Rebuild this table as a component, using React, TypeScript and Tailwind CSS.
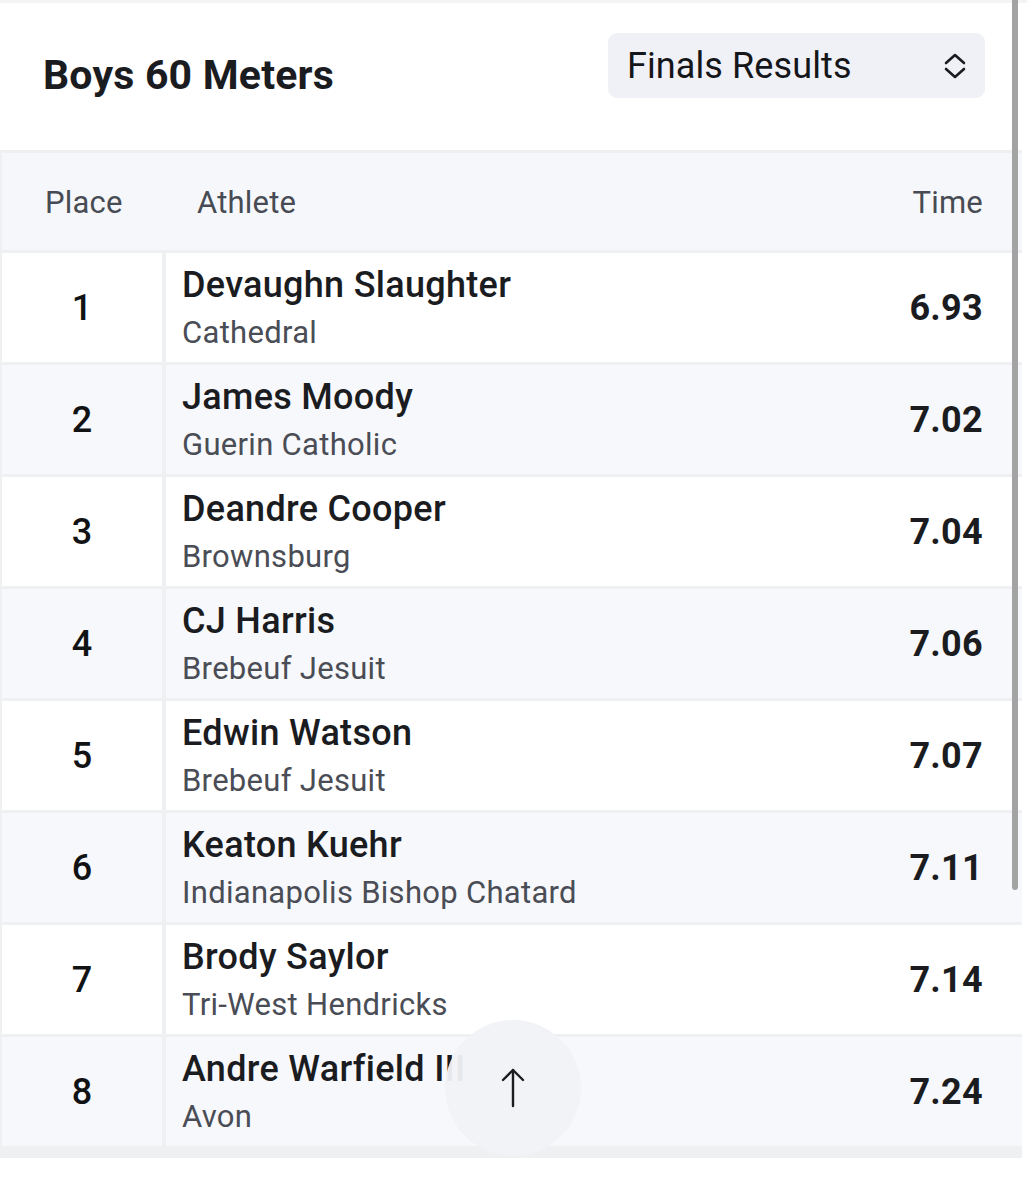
import React from 'react';

const results = [
    { place: 1, name: 'Devaughn Slaughter', school: 'Cathedral', time: '6.93' },
    { place: 2, name: 'James Moody', school: 'Guerin Catholic', time: '7.02' },
    { place: 3, name: 'Deandre Cooper', school: 'Brownsburg', time: '7.04' },
    { place: 4, name: 'CJ Harris', school: 'Brebeuf Jesuit', time: '7.06' },
    { place: 5, name: 'Edwin Watson', school: 'Brebeuf Jesuit', time: '7.07' },
    { place: 6, name: 'Keaton Kuehr', school: 'Indianapolis Bishop Chatard', time: '7.11' },
    { place: 7, name: 'Brody Saylor', school: 'Tri-West Hendricks', time: '7.14' },
    { place: 8, name: 'Andre Warfield III', school: 'Avon', time: '7.24' },
];

export default function App() {
    return (
        <div className="relative min-h-[1200px] bg-white font-['Roboto',sans-serif] text-[#1b1c1f] overflow-hidden">
            <div className="h-[3px] bg-[#f4f4f5]" />

            {/* header */}
            <div className="flex items-start justify-between pl-[43px] pr-[42px] pt-[30px] h-[147px]">
                <h1 className="mt-[22px] text-[41px] font-bold tracking-[0.2px] leading-none">Boys 60 Meters</h1>
                <div className="flex items-center justify-between w-[377px] h-[65px] rounded-[9px] bg-[#f0f1f6] pl-[19px] pr-[18px]">
                    <span className="text-[36px] leading-none tracking-[0.1px] text-[#15161a]">Finals Results</span>
                    <svg width="24" height="28" viewBox="0 0 24 28" fill="none" stroke="#1b1c1f" strokeWidth="2.6" strokeLinecap="round" strokeLinejoin="round">
                        <path d="M3 11 L12 3 L21 11" />
                        <path d="M3 17 L12 25 L21 17" />
                    </svg>
                </div>
            </div>

            {/* results table */}
            <div className="w-[1022px] bg-[#eef0f2] pl-[2px] pt-[3px] pb-[12px] flex flex-col gap-[3px]">
                <div className="flex items-center h-[97px] pt-[4px] bg-[#f6f7fa] text-[31px] tracking-[0.2px] text-[#474b53]">
                    <div className="w-[160px] pl-[43px]">Place</div>
                    <div className="flex-1 pl-[35px]">Athlete</div>
                    <div className="pr-[39px]">Time</div>
                </div>
                {results.map(r => (
                    <div key={r.place} className="flex h-[109px] gap-[4px]">
                        <div className={`w-[160px] flex items-center justify-center text-[36px] font-medium text-[#111214] ${r.place % 2 === 0 ? 'bg-[#f7f8fb]' : 'bg-white'}`}>
                            {r.place}
                        </div>
                        <div className={`flex-1 flex items-center justify-between pl-[16px] pr-[39px] ${r.place % 2 === 0 ? 'bg-[#f7f8fb]' : 'bg-white'}`}>
                            <div className="flex flex-col pt-[3px]">
                                <span className="text-[36px] font-medium leading-[46px] tracking-[0.3px] text-[#1b1c1f]">{r.name}</span>
                                <span className="text-[31px] leading-[46px] tracking-[0.3px] text-[#4a4d55] mt-[2px]">{r.school}</span>
                            </div>
                            <span className="text-[36px] font-bold tracking-[0.3px] text-[#1b1c1f]">{r.time}</span>
                        </div>
                    </div>
                ))}
            </div>

            {/* scroll to top */}
            <button className="absolute left-[445px] top-[1020px] w-[136px] h-[136px] rounded-full bg-[#f1f2f6]/95 flex items-center justify-center">
                <svg width="30" height="44" viewBox="0 0 30 44" fill="none" stroke="#1b1c1f" strokeWidth="2.4" strokeLinecap="round" strokeLinejoin="round">
                    <path d="M15 4 V40" />
                    <path d="M5 14 L15 4 L25 14" />
                </svg>
            </button>

            {/* scrollbar */}
            <div className="absolute left-[1012px] top-0 w-[6px] h-[890px] rounded-b-full bg-[#a3a3a3]" />
        </div>
    );
}
